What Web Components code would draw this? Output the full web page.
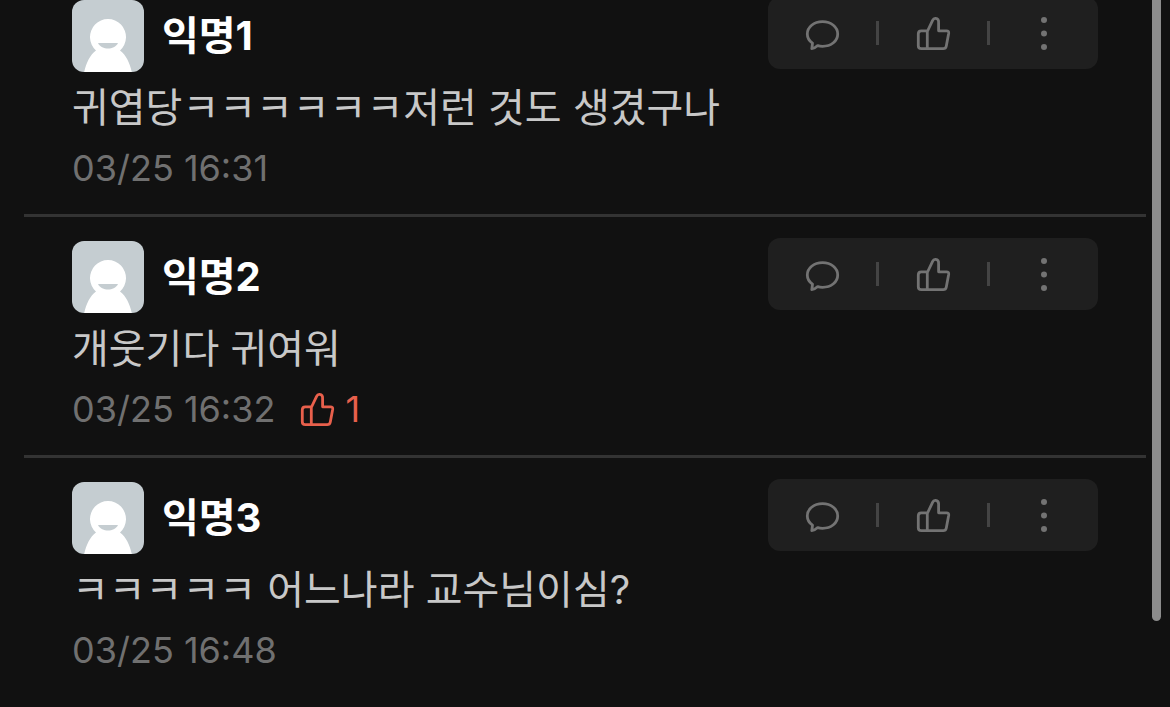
<!DOCTYPE html>
<html lang="ko">
<head>
<meta charset="utf-8">
<meta name="viewport" content="width=device-width, initial-scale=1">
<title>댓글</title>
<style>
  html { background: #111; }
  body { margin: 0; background: #111; color: #c8c8c8; font-family: Inter, "Noto Sans CJK KR", sans-serif; }
</style>
</head>
<body>
<comment-list>
  <comment-item>
    <span slot="name">익명1</span>
    <span slot="text">귀엽당ㅋㅋㅋㅋㅋㅋ저런 것도 생겼구나</span>
    <time slot="time">03/25 16:31</time>
  </comment-item>
  <comment-item>
    <span slot="name">익명2</span>
    <span slot="text">개웃기다 귀여워</span>
    <time slot="time">03/25 16:32</time>
    <like-count slot="likes">1</like-count>
  </comment-item>
  <comment-item>
    <span slot="name">익명3</span>
    <span slot="text">ㅋㅋㅋㅋㅋ 어느나라 교수님이심?</span>
    <time slot="time">03/25 16:48</time>
  </comment-item>
</comment-list>
<script>
const icons = {
  comment: '<path d="M7.800 33.700 8.500 28.200C5 25.800 3.300 22.600 3.300 19 3.300 12 9.800 6.700 18.500 6.700S33.700 12 33.700 19 27.300 31.300 18.500 31.300c-1.800 0-3.300-.2-4.800-.7-1.600 1.500-3.500 2.900-5.900 3.100z"/>',
  like: '<path d="M12.300 16.500 17.600 5.300C18.500 3.400 19.600 3.300 20.600 3.400 23 3.600 23.800 5.600 23.600 8V15.800H31.500C33.200 15.800 33.900 16.700 33.700 18.200L31.300 31C30.900 33 29.800 33.700 28.200 33.700H12.300zM12.300 15.800H6.300C4.200 15.800 3.300 16.800 3.300 18.800V30.700C3.300 32.700 4.200 33.700 6.300 33.700H12.300"/>',
  more: '<g fill="currentColor" stroke="none"><circle cx="18" cy="5" r="3"/><circle cx="18" cy="18.500" r="3"/><circle cx="18" cy="32" r="3"/></g>'
};

class UiIcon extends HTMLElement {
  connectedCallback() {
    if (this.shadowRoot) return;
    this.attachShadow({ mode: 'open' }).innerHTML = `
      <style>
        :host { display: block; flex: none; width: 36px; height: 36px; }
        svg { display: block; width: 100%; height: 100%; fill: none; stroke: currentColor; stroke-width: 2.8; stroke-linejoin: round; stroke-linecap: round; }
      </style>
      <svg viewBox="0 0 36 36" aria-hidden="true">${icons[this.getAttribute('name')]}</svg>`;
  }
}

class UserAvatar extends HTMLElement {
  constructor() {
    super();
    this.attachShadow({ mode: 'open' }).innerHTML = `
      <style>
        :host { display: block; flex: none; width: 72px; height: 72px; border-radius: 12px; overflow: hidden; background: #c5cdd1; }
        svg { display: block; }
      </style>
      <svg width="72" height="72" viewBox="0 0 72 72" aria-hidden="true">
        <path fill="#fff" d="M12 73C14 63 18 55 24 50.500A18 18 0 1 1 48 50.500C54 55 58 63 60 73z"/>
        <path fill="#c5cdd1" d="M26 43H46C44 47 40 48.500 36 48.500S28 47 26 43z"/>
      </svg>`;
  }
}

class LikeCount extends HTMLElement {
  constructor() {
    super();
    this.attachShadow({ mode: 'open' }).innerHTML = `
      <style>
        :host { display: flex; align-items: center; gap: 10px; color: #e8604c; }
      </style>
      <ui-icon name="like"></ui-icon><span><slot></slot></span>`;
  }
}

class CommentActions extends HTMLElement {
  constructor() {
    super();
    this.attachShadow({ mode: 'open' }).innerHTML = `
      <style>
        :host { display: flex; flex: none; align-items: center; height: 72px; border-radius: 12px; background: #1f1f1f; }
        button { display: flex; align-items: center; justify-content: center; width: 108px; height: 72px; padding: 0; border: 0; background: none; color: #737373; cursor: pointer; }
        i { width: 3px; height: 24px; background: #444; }
      </style>
      <button type="button" aria-label="대댓글"><ui-icon name="comment"></ui-icon></button><i></i>
      <button type="button" aria-label="공감"><ui-icon name="like"></ui-icon></button><i></i>
      <button type="button" aria-label="더보기"><ui-icon name="more"></ui-icon></button>`;
  }
}

class CommentItem extends HTMLElement {
  constructor() {
    super();
    this.attachShadow({ mode: 'open' }).innerHTML = `
      <style>
        :host { display: block; padding: 0 48px 22px; }
        header { display: flex; align-items: center; gap: 18px; height: 72px; }
        h3 { flex: 1; margin: 0; color: #fff; font-size: 40px; line-height: 56px; font-weight: 700; }
        comment-actions { margin-top: -6px; }
        p { margin: 8px 0; font-size: 40px; line-height: 56px; }
        footer { display: flex; align-items: center; gap: 24px; color: #707070; font-size: 36px; line-height: 48px; }
      </style>
      <header>
        <user-avatar></user-avatar>
        <h3><slot name="name"></slot></h3>
        <comment-actions></comment-actions>
      </header>
      <p><slot name="text"></slot></p>
      <footer><slot name="time"></slot><slot name="likes"></slot></footer>`;
  }
}

class CommentList extends HTMLElement {
  constructor() {
    super();
    this.attachShadow({ mode: 'open' }).innerHTML = `
      <style>
        :host { display: block; position: relative; box-sizing: border-box; height: 100vh; padding: 0 24px; overflow: hidden; }
        ::slotted(comment-item:not(:first-of-type)) { border-top: 3px solid #333; padding-top: 24px; }
        .thumb { position: absolute; top: 0; right: 9px; width: 9px; height: 621px; border-radius: 0 0 5px 5px; background: #8c8c8c; }
      </style>
      <slot></slot>
      <div class="thumb"></div>`;
  }
}

customElements.define('ui-icon', UiIcon);
customElements.define('user-avatar', UserAvatar);
customElements.define('like-count', LikeCount);
customElements.define('comment-actions', CommentActions);
customElements.define('comment-item', CommentItem);
customElements.define('comment-list', CommentList);
</script>
</body>
</html>
